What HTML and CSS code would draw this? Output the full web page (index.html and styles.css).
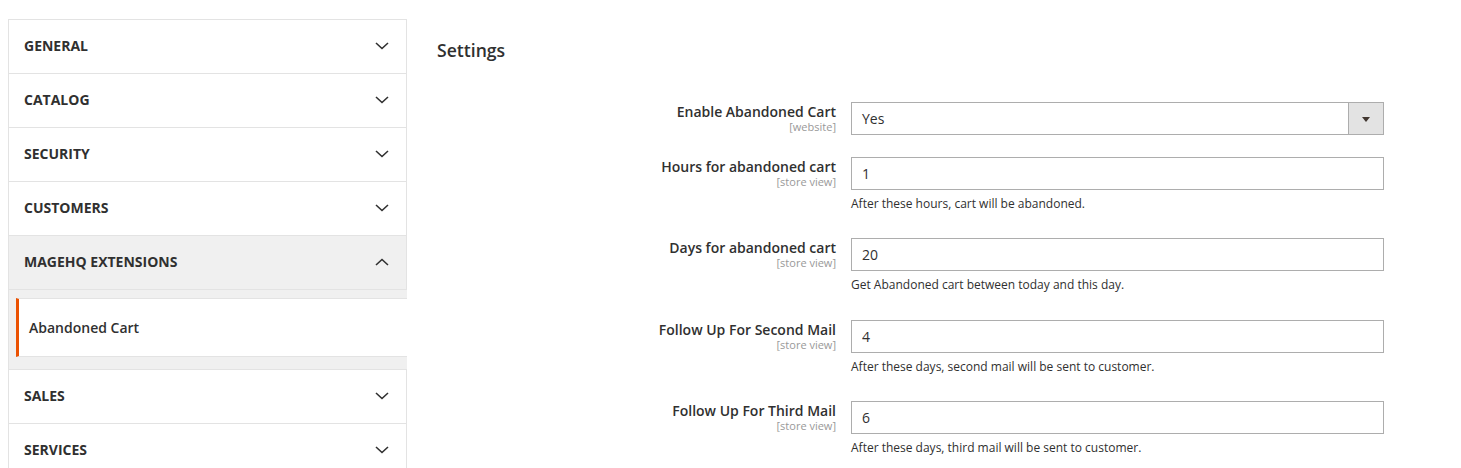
FILE: index.html
```html
<!DOCTYPE html>
<html lang="en">
<head>
    <meta charset="UTF-8">
    <meta name="viewport" content="width=device-width, initial-scale=1.0">
    <title>Configuration - Abandoned Cart</title>
    <link rel="stylesheet" href="styles.css">
</head>
<body>
    <div class="page">
        <div class="tabs">
            <div class="tab">
                <span>General</span>
                <svg class="chevron" viewBox="0 0 14 8"><path d="M1 1l6 5.5L13 1"/></svg>
            </div>
            <div class="tab">
                <span>Catalog</span>
                <svg class="chevron" viewBox="0 0 14 8"><path d="M1 1l6 5.5L13 1"/></svg>
            </div>
            <div class="tab">
                <span>Security</span>
                <svg class="chevron" viewBox="0 0 14 8"><path d="M1 1l6 5.5L13 1"/></svg>
            </div>
            <div class="tab">
                <span>Customers</span>
                <svg class="chevron" viewBox="0 0 14 8"><path d="M1 1l6 5.5L13 1"/></svg>
            </div>
            <div class="tab tab-open">
                <span>MageHQ Extensions</span>
                <svg class="chevron" viewBox="0 0 14 8"><path d="M1 7L7 1.5 13 7"/></svg>
            </div>
            <div class="tab-items">
                <div class="tab-item active">Abandoned Cart</div>
            </div>
            <div class="tab">
                <span>Sales</span>
                <svg class="chevron" viewBox="0 0 14 8"><path d="M1 1l6 5.5L13 1"/></svg>
            </div>
            <div class="tab">
                <span>Services</span>
                <svg class="chevron" viewBox="0 0 14 8"><path d="M1 1l6 5.5L13 1"/></svg>
            </div>
        </div>

        <div class="main">
            <h2 class="section-title">Settings</h2>

            <div class="form">
                <div class="row">
                    <div class="label">
                        <span>Enable Abandoned Cart</span>
                        <span class="scope">[website]</span>
                    </div>
                    <div class="value">
                        <div class="select">
                            <span>Yes</span>
                            <span class="select-arrow"></span>
                        </div>
                    </div>
                </div>

                <div class="row">
                    <div class="label">
                        <span>Hours for abandoned cart</span>
                        <span class="scope">[store view]</span>
                    </div>
                    <div class="value">
                        <input class="input" type="text" value="1">
                        <p class="note">After these hours, cart will be abandoned.</p>
                    </div>
                </div>

                <div class="row">
                    <div class="label">
                        <span>Days for abandoned cart</span>
                        <span class="scope">[store view]</span>
                    </div>
                    <div class="value">
                        <input class="input" type="text" value="20">
                        <p class="note">Get Abandoned cart between today and this day.</p>
                    </div>
                </div>

                <div class="row">
                    <div class="label">
                        <span>Follow Up For Second Mail</span>
                        <span class="scope">[store view]</span>
                    </div>
                    <div class="value">
                        <input class="input" type="text" value="4">
                        <p class="note">After these days, second mail will be sent to customer.</p>
                    </div>
                </div>

                <div class="row">
                    <div class="label">
                        <span>Follow Up For Third Mail</span>
                        <span class="scope">[store view]</span>
                    </div>
                    <div class="value">
                        <input class="input" type="text" value="6">
                        <p class="note">After these days, third mail will be sent to customer.</p>
                    </div>
                </div>
            </div>
        </div>
    </div>
</body>
</html>
```

FILE: styles.css
```css
body {
    margin: 0;
    font-family: "Open Sans", "Liberation Sans", sans-serif;
    color: #303030;
    background-color: #ffffff;
}

.page {
    display: flex;
    align-items: flex-start;
    gap: 30px;
    padding: 19px 0 0 8px;
}

/* left config tabs */
.tabs {
    width: 399px;
    flex-shrink: 0;
    box-sizing: border-box;
    border: 1px solid #e3e3e3;
    border-bottom: none;
}

.tab {
    display: flex;
    justify-content: space-between;
    align-items: center;
    height: 54px;
    box-sizing: border-box;
    padding: 0 17px 2px 15px;
    border-bottom: 1px solid #e3e3e3;
    font-size: 14px;
    font-weight: 700;
    text-transform: uppercase;
    color: #303030;
}

.tab-open {
    background-color: #f0f0f0;
}

.chevron {
    width: 14px;
    height: 8px;
    fill: none;
    stroke: #303030;
    stroke-width: 1.6;
}

.tab-items {
    background-color: #f0f0f0;
    padding: 8px 0 12px 7px;
    margin-right: -1px;
    border-bottom: 1px solid #e3e3e3;
}

.tab-item {
    height: 57px;
    display: flex;
    align-items: center;
    padding-left: 10px;
    background-color: #ffffff;
    border-top: 1px solid #e3e3e3;
    border-bottom: 1px solid #e3e3e3;
    border-left: 3px solid #eb5202;
    font-size: 14px;
    font-weight: 600;
    color: #303030;
}

/* main form */
.main {
    flex: 1;
}

.section-title {
    margin: 18px 0 0;
    font-size: 17.6px;
    font-weight: 600;
    line-height: 26px;
    color: #303030;
}

.form {
    margin-top: 39px;
}

.row {
    display: grid;
    grid-template-columns: 399px 533px;
    column-gap: 15px;
    margin-bottom: 22px;
}

.label {
    display: flex;
    flex-direction: column;
    align-items: flex-end;
    padding-top: 1px;
    font-size: 14px;
    font-weight: 600;
    line-height: 18px;
    color: #303030;
}

.scope {
    margin-top: -1px;
    font-size: 11px;
    font-weight: 400;
    line-height: 14px;
    color: #999999;
}

.input,
.select {
    display: flex;
    align-items: center;
    width: 100%;
    height: 33px;
    box-sizing: border-box;
    margin: 0;
    padding: 0 10px;
    border: 1px solid #adadad;
    font-family: inherit;
    font-size: 14px;
    color: #303030;
    background-color: #ffffff;
    outline: none;
}

.select {
    justify-content: space-between;
    padding-right: 0;
}

.select-arrow {
    position: relative;
    width: 34px;
    height: 100%;
    border-left: 1px solid #adadad;
    background-color: #e3e3e3;
}

.select-arrow::after {
    content: "";
    position: absolute;
    top: 14px;
    left: 13px;
    border-left: 4px solid transparent;
    border-right: 4px solid transparent;
    border-top: 5px solid #41362f;
}

.note {
    margin: 5px 0 4px;
    font-size: 12px;
    line-height: 17.3px;
    color: #303030;
}
```
